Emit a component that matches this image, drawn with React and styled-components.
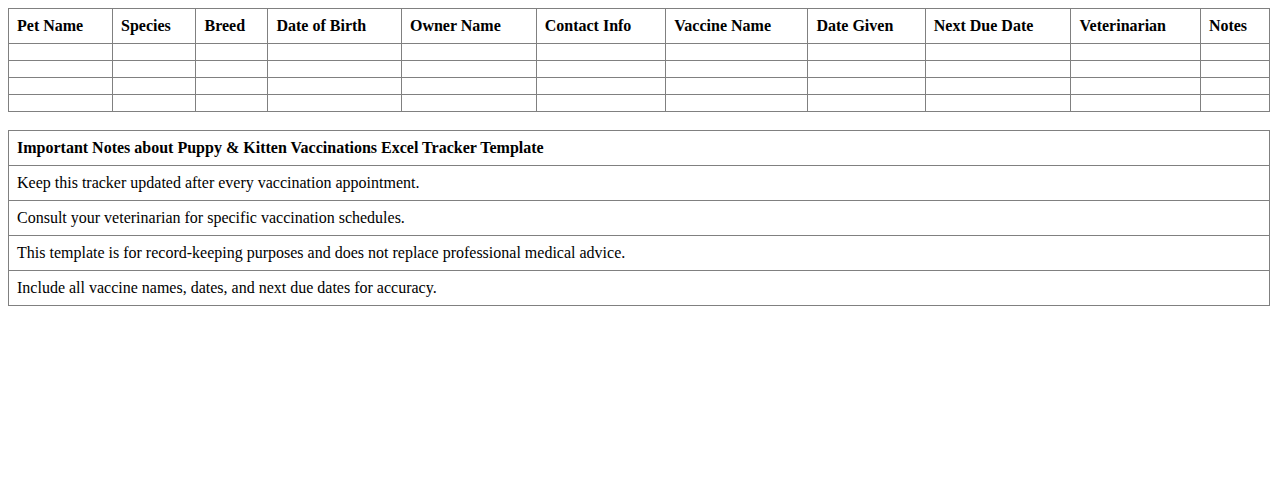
import React from 'react';
import styled, { createGlobalStyle } from 'styled-components';

const GlobalStyle = createGlobalStyle`
  body {
    margin: 8px;
    font-family: "Liberation Serif", "Times New Roman", serif;
    font-size: 16px;
    color: #000;
    background: #fff;
  }
`;

const Table = styled.table`
  width: 100%;
  border-collapse: collapse;
  margin-bottom: ${props => props.gap || 0}px;
`;

const Th = styled.th`
  border: 1px solid #808080;
  padding: 8px;
  text-align: left;
  font-weight: bold;
`;

const Td = styled.td`
  border: 1px solid #808080;
  padding: 8px;
  text-align: left;
`;

const columns = [
  'Pet Name', 'Species', 'Breed', 'Date of Birth', 'Owner Name', 'Contact Info',
  'Vaccine Name', 'Date Given', 'Next Due Date', 'Veterinarian', 'Notes'
];

const notes = [
  'Keep this tracker updated after every vaccination appointment.',
  'Consult your veterinarian for specific vaccination schedules.',
  'This template is for record-keeping purposes and does not replace professional medical advice.',
  'Include all vaccine names, dates, and next due dates for accuracy.'
];

export default function App() {
  return (
    <>
      <GlobalStyle />
      <Table gap={18}>
        <thead>
          <tr>
            {columns.map(c => <Th key={c}>{c}</Th>)}
          </tr>
        </thead>
        <tbody>
          {[0, 1, 2, 3].map(r => (
            <tr key={r}>
              {columns.map(c => <Td key={c}></Td>)}
            </tr>
          ))}
        </tbody>
      </Table>

      <Table>
        <thead>
          <tr>
            <Th>Important Notes about Puppy &amp; Kitten Vaccinations Excel Tracker Template</Th>
          </tr>
        </thead>
        <tbody>
          {notes.map(n => (
            <tr key={n}>
              <Td>{n}</Td>
            </tr>
          ))}
        </tbody>
      </Table>
    </>
  );
}
